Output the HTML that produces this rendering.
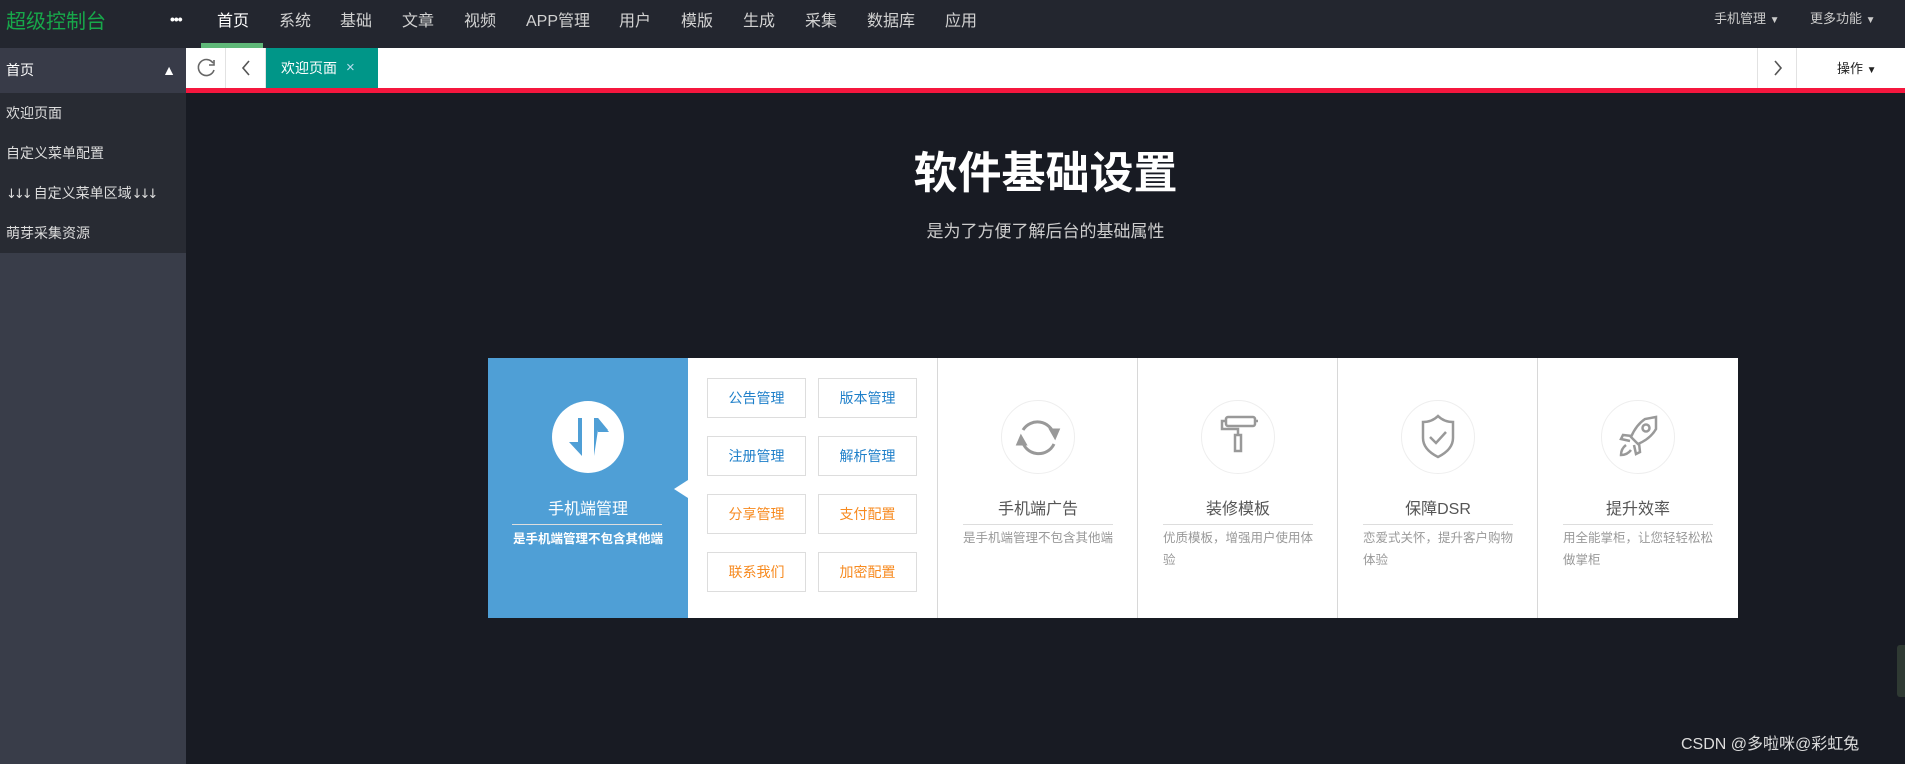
<!DOCTYPE html>
<html><head><meta charset="utf-8"><style>
*{margin:0;padding:0;box-sizing:border-box}
body{width:1905px;height:764px;overflow:hidden;background:#181b23;font-family:"Liberation Sans","Noto Sans CJK SC",sans-serif;position:relative}
.abs{position:absolute}
.top{left:0;top:0;width:1905px;height:48px;background:#23262f}
.logo{left:6px;top:5px;color:#17a84a;font-size:20px}
.nav span{position:absolute;top:7px;font-size:16px;color:#d2d2d2}
.side{left:0;top:48px;width:186px;height:716px;background:#393d49}
.side .it{position:absolute;left:0;width:186px;height:40px;background:#282b33;color:#ddd;font-size:14px;line-height:40px;padding-left:6px}
.tabbar{left:186px;top:48px;width:1719px;height:40px;background:#fff}
.red{left:186px;top:88px;width:1719px;height:5px;background:#f5173e}
.btn{position:absolute;top:0;width:40px;height:40px;border-right:1px solid #e2e2e2}
.card{left:488px;top:358px;width:1250px;height:260px;background:#fff}
.blue{left:488px;top:358px;width:200px;height:260px;background:#4f9fd6}
.b{position:absolute;width:99px;height:40px;border:1px solid #ddd;font-size:14px;text-align:center;line-height:38px;color:#1e7fc9;background:#fff}
.o{color:#f78a1f}
.col{position:absolute;top:358px;width:200px;height:260px;border-left:1px solid #d8d8d8}
.col .c{position:absolute;left:63px;top:42px;width:74px;height:74px;border:1px solid #eee;border-radius:50%}
.col .t{position:absolute;left:0;width:200px;top:137px;text-align:center;font-size:16px;color:#555}
.col .l{position:absolute;left:25px;width:150px;top:166px;border-top:1px solid #ddd}
.col .d{position:absolute;left:25px;width:152px;top:169px;font-size:12.5px;color:#999;line-height:22px}
.ar{letter-spacing:-3px;font-family:"DejaVu Sans",sans-serif;font-size:13px}
</style></head><body>
<div class="abs top"></div>
<div class="abs logo">超级控制台</div>
<div class="abs" style="left:170px;top:11px;color:#fff;font-size:14px;font-weight:bold;letter-spacing:-1px">•••</div>
<div class="abs" style="left:201px;top:43px;width:62px;height:5px;background:#5fb878"></div>
<div class="nav">
<span style="left:217px;color:#fff">首页</span><span style="left:279px">系统</span><span style="left:340px">基础</span><span style="left:402px">文章</span><span style="left:464px">视频</span><span style="left:526px">APP管理</span><span style="left:619px">用户</span><span style="left:681px">模版</span><span style="left:743px">生成</span><span style="left:805px">采集</span><span style="left:867px">数据库</span><span style="left:945px">应用</span>
</div>
<div class="abs" style="left:1714px;top:8px;color:#ccc;font-size:13px">手机管理 <span style="font-size:10px">▼</span></div>
<div class="abs" style="left:1810px;top:8px;color:#ccc;font-size:13px">更多功能 <span style="font-size:10px">▼</span></div>

<div class="abs side">
<div class="it" style="top:0;height:45px;line-height:45px;background:#383b48;color:#fff">首页<span style="position:absolute;right:10px;font-size:14px">▲</span></div>
<div class="it" style="top:45px">欢迎页面</div>
<div class="it" style="top:85px">自定义菜单配置</div>
<div class="it" style="top:125px"><span class="ar">↓↓↓</span>&nbsp;自定义菜单区域<span class="ar">↓↓↓</span></div>
<div class="it" style="top:165px">萌芽采集资源</div>
</div>

<div class="abs tabbar">
<div class="btn" style="left:0"><svg width="40" height="40"><path d="M27 15 A8 8 0 1 0 28 22" fill="none" stroke="#666" stroke-width="1.6"/><path d="M28 12 L28 17 L23 17" fill="none" stroke="#666" stroke-width="1.6"/></svg></div>
<div class="btn" style="left:40px"><svg width="40" height="40"><path d="M23 13 L17 20 L23 27" fill="none" stroke="#555" stroke-width="1.6"/></svg></div>
<div class="abs" style="left:80px;top:0;width:112px;height:40px;background:#009688;color:#fff;font-size:14px;line-height:40px;padding-left:15px">欢迎页面<span style="position:absolute;left:80px;color:#bde;font-size:15px">×</span></div>
<div class="btn" style="left:1571px;border-left:1px solid #e2e2e2"><svg width="40" height="40"><path d="M17 13 L23 20 L17 27" fill="none" stroke="#555" stroke-width="1.6"/></svg></div>
<div class="abs" style="left:1651px;top:10px;font-size:13px;color:#222">操作 <span style="font-size:10px">▼</span></div>
</div>
<div class="abs red"></div>

<div class="abs" style="left:186px;width:1719px;top:137px;text-align:center;color:#fff;font-size:44px;font-weight:bold">软件基础设置</div>
<div class="abs" style="left:186px;width:1719px;top:217px;text-align:center;color:#ccc;font-size:17px">是为了方便了解后台的基础属性</div>

<div class="abs card"></div>
<div class="abs blue">
<svg class="abs" style="left:63px;top:42px" width="74" height="74"><circle cx="37" cy="37" r="36" fill="#fff"/><path d="M27 18 H31 V56 L18 42 H27 Z" fill="#4f9fd6"/><path d="M43 56 H47 V18 L57 30 H47 M43 18 H47 V56 H43 Z" fill="#4f9fd6"/><path d="M47 18 L58 32 L47 32 Z" fill="#4f9fd6"/></svg>
<div class="abs" style="left:0;width:200px;top:137px;text-align:center;color:#fff;font-size:16px">手机端管理</div>
<div class="abs" style="left:24px;width:150px;top:166px;border-top:1px solid #ddd"></div>
<div class="abs" style="left:0;width:200px;top:170px;text-align:center;color:#fff;font-size:12.5px;font-weight:bold">是手机端管理不包含其他端</div>
<div class="abs" style="left:186px;top:122px;width:0;height:0;border-top:9px solid transparent;border-bottom:9px solid transparent;border-right:14px solid #fff"></div>
</div>
<div class="b" style="left:707px;top:378px">公告管理</div><div class="b" style="left:818px;top:378px">版本管理</div>
<div class="b" style="left:707px;top:436px">注册管理</div><div class="b" style="left:818px;top:436px">解析管理</div>
<div class="b o" style="left:707px;top:494px">分享管理</div><div class="b o" style="left:818px;top:494px">支付配置</div>
<div class="b o" style="left:707px;top:552px">联系我们</div><div class="b o" style="left:818px;top:552px">加密配置</div>

<div class="col" style="left:937px"><div class="c"></div>
<svg class="abs" style="left:63px;top:42px" width="74" height="74" fill="none" stroke="#999" stroke-width="3"><path d="M53 35 A17 17 0 0 0 22 30"/><path d="M21 40 A17 17 0 0 0 53 44"/><path d="M50 30 L54 37 L57 30 Z" fill="#999"/><path d="M24 44 L20 37 L17 44 Z" fill="#999"/></svg>
<div class="t">手机端广告</div><div class="l"></div><div class="d">是手机端管理不包含其他端</div></div>
<div class="col" style="left:1137px"><div class="c"></div>
<svg class="abs" style="left:63px;top:42px" width="74" height="74" fill="none" stroke="#999" stroke-width="2.5"><rect x="25" y="17" width="29" height="9" rx="2"/><path d="M54 21 H57 M25 21 H21 V29 H37 V35"/><rect x="34" y="35" width="6" height="16"/></svg>
<div class="t">装修模板</div><div class="l"></div><div class="d">优质模板，增强用户使用体验</div></div>
<div class="col" style="left:1337px"><div class="c"></div>
<svg class="abs" style="left:63px;top:42px" width="74" height="74" fill="none" stroke="#999" stroke-width="2.5"><path d="M37 16 C32 21 27 22 22 22 V38 C22 47 29 53 37 57 C45 53 52 47 52 38 V22 C47 22 42 21 37 16 Z"/><path d="M29 37 L35 43 L45 32"/></svg>
<div class="t">保障DSR</div><div class="l"></div><div class="d">恋爱式关怀，提升客户购物体验</div></div>
<div class="col" style="left:1537px;width:201px"><div class="c"></div>
<svg class="abs" style="left:63px;top:42px" width="74" height="74" fill="none" stroke="#999" stroke-width="2.5"><path d="M55 17 L44 19 C38 23 33 30 30 37 L37 44 C44 41 51 36 55 29 Z"/><circle cx="45" cy="28" r="3.5"/><path d="M31 36 L22 35 L20 39 L29 41 M38 43 L39 52 L35 54 L33 45"/><path d="M25 45 C21 48 20 52 20 55 C23 55 27 54 30 50"/></svg>
<div class="t">提升效率</div><div class="l"></div><div class="d">用全能掌柜，让您轻轻松松做掌柜</div></div>

<div class="abs" style="left:1897px;top:645px;width:8px;height:52px;background:#2f3a33;border-radius:3px 0 0 3px"></div>
<div class="abs" style="left:1681px;top:730px;color:#ddd;font-size:16px">CSDN @多啦咪@彩虹兔</div>
</body></html>
